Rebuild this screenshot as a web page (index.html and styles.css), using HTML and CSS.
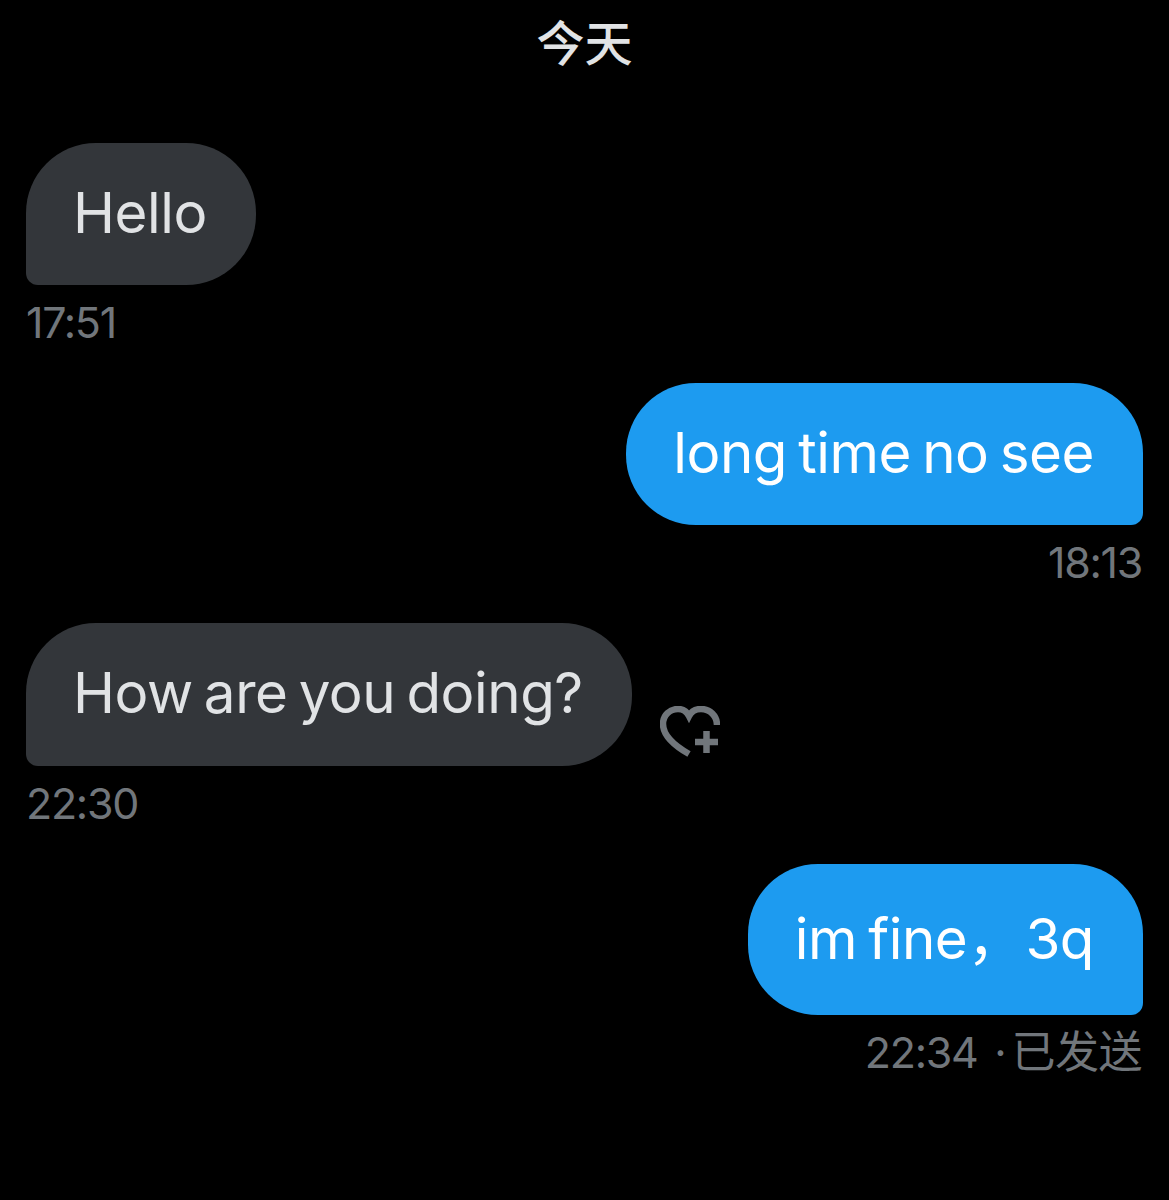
FILE: index.html
```html
<!DOCTYPE html>
<html lang="zh">
<head>
    <meta charset="UTF-8">
    <title>今天</title>
    <meta name="viewport" content="width=device-width, initial-scale=1">
    <link rel="stylesheet" href="styles.css">
</head>
<body>
<div class="chat">
    <div class="day">今天</div>

    <div class="msg">
        <div class="row">
            <div class="bubble">Hello</div>
        </div>
        <div class="time">17:51</div>
    </div>

    <div class="msg mine">
        <div class="row">
            <div class="bubble">long time no see</div>
        </div>
        <div class="time">18:13</div>
    </div>

    <div class="msg">
        <div class="row">
            <div class="bubble">How are you doing?</div>
            <svg class="react" viewBox="0 0 60 52" width="60" height="52" fill="none" stroke="#71767b" stroke-width="6.5">
                <path d="M29 48C15 40 3 30 3 18C3 9 10 3 18 3C23 3 27 6 29 10C31 6 35 3 41 3C50 3 57 10 57 19"/>
                <path d="M35 36H58M46.5 25V47"/>
            </svg>
        </div>
        <div class="time">22:30</div>
    </div>

    <div class="msg mine">
        <div class="row">
            <div class="bubble tall">im fine<span class="comma">，</span>3q</div>
        </div>
        <div class="time">22:34 <span class="dot">·</span> <span class="sent">已发送</span></div>
    </div>
</div>
</body>
</html>
```

FILE: styles.css
```css
body {
  background: #000;
  font-family: Inter, "Noto Sans CJK SC", sans-serif;
  margin: 0;
  min-height: 1200px;
}
.chat {
  display: flex;
  flex-direction: column;
  padding: 14px 26px 0;
}
.day {
  color: #e1e3e5;
  font-size: 48px;
  font-weight: 500;
  line-height: 60px;
  text-align: center;
  margin-bottom: 69px;
}
.msg {
  display: flex;
  flex-direction: column;
  align-items: flex-start;
  margin-bottom: 40px;
}
.msg.mine {
  align-items: flex-end;
}
.row {
  display: flex;
  align-items: flex-end;
}
.bubble {
  background: #33363a;
  color: #e1e3e5;
  font-size: 56.5px;
  letter-spacing: -0.45px;
  word-spacing: -4.3px;
  line-height: 68.2px;
  padding: 36px 49px 38px 47px;
  border-radius: 70px 70px 70px 12px;
}
.mine .bubble {
  background: #1d9bf0;
  color: #fff;
  border-radius: 70px 70px 12px 70px;
}
.bubble.tall {
  line-height: 77px;
}
.comma {
  margin-right: 2px;
}
.react {
  margin: 0 0 8px 28px;
}
.time {
  color: #71767b;
  font-size: 43px;
  letter-spacing: -1.3px;
  line-height: 42px;
  margin-top: 16px;
}
.mine .time {
  padding-right: 1px;
}
.dot {
  letter-spacing: 0;
  margin: 0 -6px 0 6px;
}
.sent {
  font-size: 44px;
  letter-spacing: -0.5px;
}
```
